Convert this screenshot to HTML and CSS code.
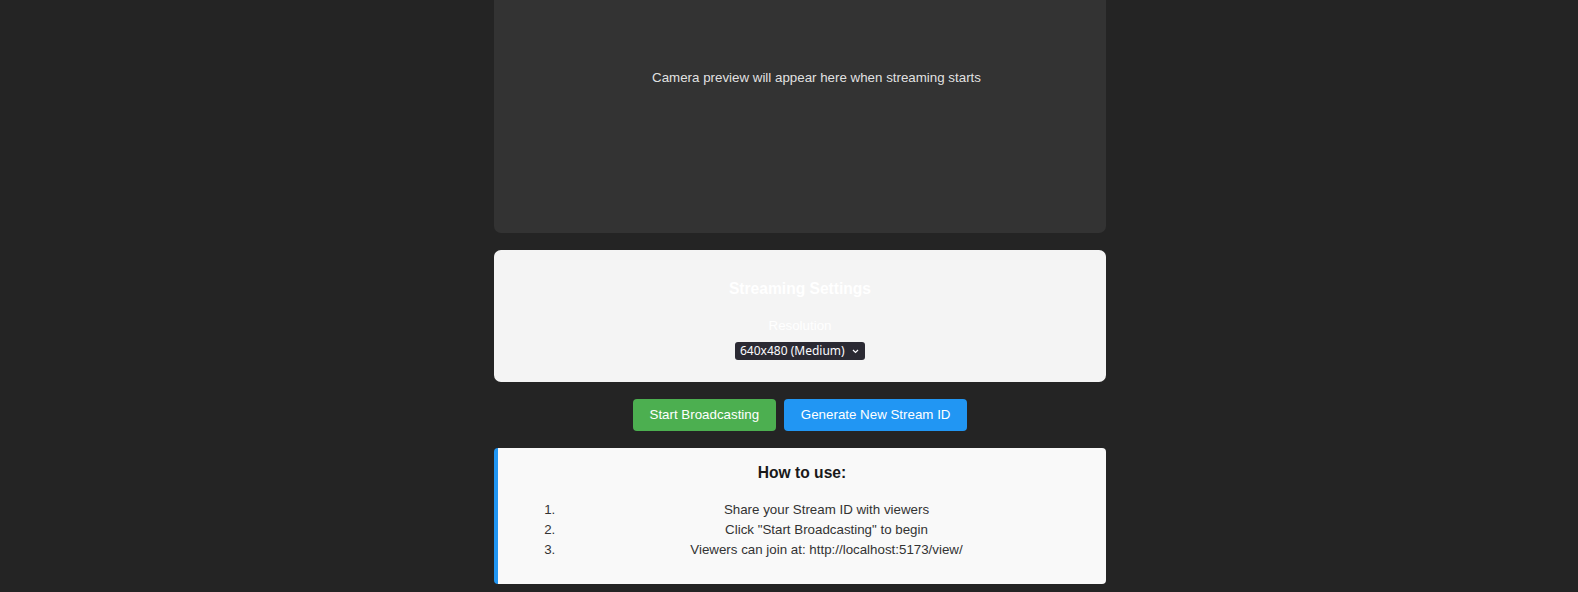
FILE: index.html
```html
<!DOCTYPE html>
<html lang="en">
<head>
<meta charset="utf-8">
<title>Broadcast</title>
<link rel="stylesheet" href="styles.css">
</head>
<body>
<div class="page">
  <main class="app">
    <div class="preview">
      <p class="preview-text">Camera preview will appear here when streaming starts</p>
    </div>
    <section class="settings">
      <h3 class="settings-title">Streaming Settings</h3>
      <label class="field-label" for="res">Resolution</label>
      <div class="select-row">
        <span class="select-wrap">
          <select id="res" class="select">
            <option>640x480 (Medium)</option>
          </select>
          <svg class="chevron" width="7" height="5" viewBox="0 0 7 5"><path d="M1 1 L3.5 3.5 L6 1" fill="none" stroke="#fbfbfe" stroke-width="1.2"/></svg>
        </span>
      </div>
    </section>
    <div class="actions">
      <button class="btn btn-green">Start Broadcasting</button>
      <button class="btn btn-blue">Generate New Stream ID</button>
    </div>
    <section class="howto">
      <h3 class="howto-title">How to use:</h3>
      <ol class="steps">
        <li>Share your Stream ID with viewers</li>
        <li>Click "Start Broadcasting" to begin</li>
        <li>Viewers can join at: http://localhost:5173/view/</li>
      </ol>
    </section>
  </main>
</div>
</body>
</html>
```
FILE: styles.css
```css
* { box-sizing: border-box; }
html, body { margin: 0; padding: 0; }
body {
  background: #242424;
  font-family: "Liberation Sans", Arial, sans-serif;
  font-size: 13.33px;
  color: rgba(255,255,255,0.87);
}
.page {
  height: 100vh;
  overflow: hidden;
  display: flex;
  flex-direction: column;
  justify-content: flex-end;
  align-items: center;
  padding-left: 22px;
  padding-bottom: 8px;
}
.app {
  width: 612px;
  flex-shrink: 0;
  display: flex;
  flex-direction: column;
  gap: 17px;
}
.preview {
  height: 310px;
  flex-shrink: 0;
  background: #333333;
  border-radius: 7px;
  display: flex;
  align-items: center;
  justify-content: center;
  padding-left: 33px;
}
.preview-text {
  margin: 0;
  line-height: 16px;
  color: rgba(255,255,255,0.87);
}
.settings {
  flex-shrink: 0;
  background: #f4f4f4;
  border-radius: 7px;
  padding: 30.5px 20px 21.5px;
  text-align: center;
}
.settings-title {
  margin: 0;
  font-size: 15.6px;
  line-height: 18px;
  font-weight: bold;
  color: #ffffff;
}
.field-label {
  display: block;
  margin-top: 20px;
  line-height: 15px;
  color: #ffffff;
}
.select-row { margin-top: 9px; height: 18px; display: flex; justify-content: center; }
.select-wrap {
  display: inline-flex;
  align-items: center;
  width: 130px;
  height: 18px;
  background: #2b2a33;
  border-radius: 3px;
  padding: 0 6px 0 5px;
}
.select {
  appearance: none;
  -webkit-appearance: none;
  background: transparent;
  border: none;
  outline: none;
  padding: 0;
  margin: 0;
  flex: 1;
  color: #fbfbfe;
  font-family: "Noto Sans", sans-serif;
  font-size: 12px;
  line-height: 18px;
  height: 18px;
}
.chevron { flex-shrink: 0; }
.actions {
  display: flex;
  justify-content: center;
  gap: 8.3px;
}
.btn {
  border: none;
  border-radius: 4px;
  padding: 8.25px 16.7px;
  font-family: "Liberation Sans", Arial, sans-serif;
  font-size: 13.33px;
  line-height: 16px;
  color: #ffffff;
  cursor: pointer;
}
.btn-green { background: #4caf50; }
.btn-blue { background: #2196f3; }
.howto {
  flex-shrink: 0;
  background: #f9f9f9;
  border-left: 4px solid #2196f3;
  border-radius: 4px;
  padding: 16px 12px 24px;
  text-align: center;
}
.howto-title {
  margin: 0 0 18px;
  font-size: 15.6px;
  line-height: 18px;
  font-weight: bold;
  color: #1a1a1a;
}
.steps {
  margin: 0;
  padding-left: 49px;
  color: #333333;
}
.steps li { line-height: 20px; }
```
